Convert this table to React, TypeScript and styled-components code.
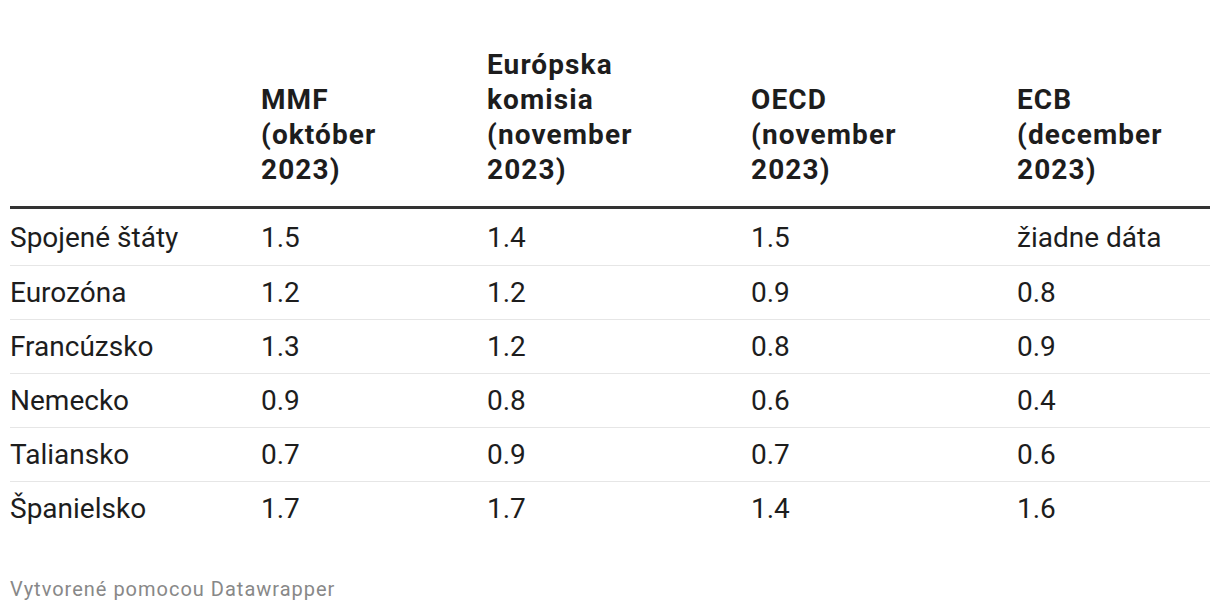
import styled, { createGlobalStyle } from 'styled-components';

const GlobalStyle = createGlobalStyle`
	html, body {
		margin: 0;
		padding: 0;
		background: #ffffff;
	}
	body {
		font-family: Roboto, 'Noto Sans', sans-serif;
		color: #1d1d1d;
	}
`;

const Page = styled.div`
	padding: 47px 10px 0 10px;
	width: 1200px;
`;

const Table = styled.div`
	display: grid;
	grid-template-columns: 251px 226px 264px 266px 193px;
`;

const HeadCell = styled.div`
	display: flex;
	align-items: flex-end;
	font-size: 28px;
	font-weight: 700;
	letter-spacing: 1.1px;
	line-height: 35px;
	padding-bottom: 19px;
	border-bottom: 3px solid #333333;
`;

const Cell = styled.div<{ $last?: boolean; $first?: boolean }>`
	font-size: 28px;
	font-weight: 400;
	line-height: 33px;
	padding: ${ (p) => (p.$first ? '12px 0 11px 0' : '10px 0') };
	border-bottom: ${ (p) => (p.$last ? 'none' : '1px solid #e6e6e6') };
`;

const Footer = styled.div`
	margin-top: 42px;
	font-size: 20px;
	letter-spacing: 1px;
	color: #888888;
	line-height: 24px;
`;

const headers = [
	'',
	'MMF\n(október\n2023)',
	'Európska\nkomisia\n(november\n2023)',
	'OECD\n(november\n2023)',
	'ECB\n(december\n2023)'
];

const rows = [
	['Spojené štáty', '1.5', '1.4', '1.5', 'žiadne dáta'],
	['Eurozóna', '1.2', '1.2', '0.9', '0.8'],
	['Francúzsko', '1.3', '1.2', '0.8', '0.9'],
	['Nemecko', '0.9', '0.8', '0.6', '0.4'],
	['Taliansko', '0.7', '0.9', '0.7', '0.6'],
	['Španielsko', '1.7', '1.7', '1.4', '1.6']
];

export default function App() {
	return (
		<Page>
			<GlobalStyle />
			<Table>
				{ headers.map((h, i) => (
					<HeadCell key={ 'h' + i }>
						<span>
							{ h.split('\n').map((line, j) => (
								<span key={ j }>
									{ j > 0 && <br /> }
									{ line }
								</span>
							)) }
						</span>
					</HeadCell>
				)) }
				{ rows.map((row, r) =>
					row.map((value, c) => (
						<Cell
							key={ r + '-' + c }
							$first={ r === 0 }
							$last={ r === rows.length - 1 }
						>
							{ value }
						</Cell>
					))
				) }
			</Table>
			<Footer>Vytvorené pomocou Datawrapper</Footer>
		</Page>
	);
}
